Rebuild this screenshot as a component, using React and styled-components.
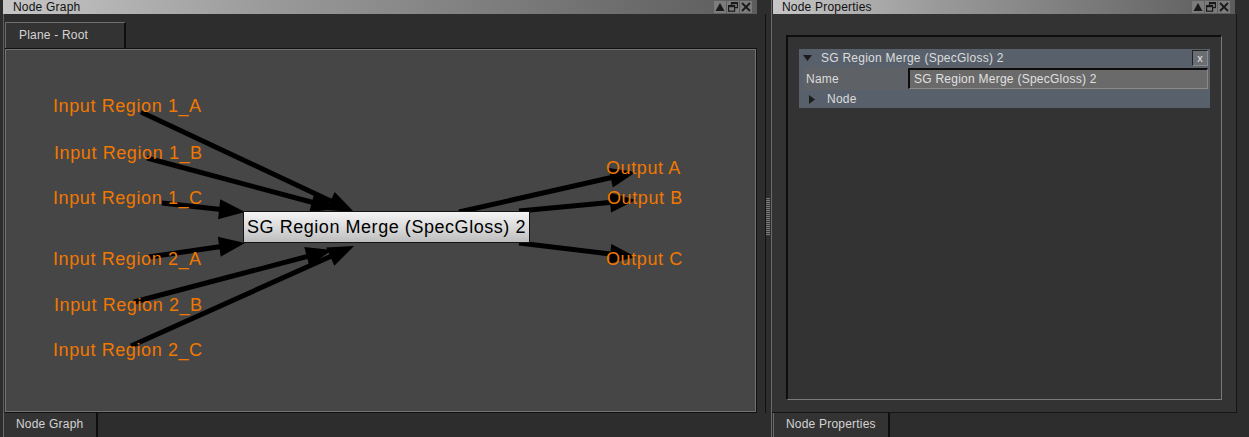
import React from "react";
import styled, { createGlobalStyle } from "styled-components";

const GlobalStyle = createGlobalStyle`
  html, body {
    margin: 0;
    padding: 0;
    background: #2d2d2d;
  }
  body {
    font-family: "Liberation Sans", Arial, sans-serif;
    overflow: hidden;
  }
`;

// canvas padding-box origin in page coordinates
const OX = 7;
const OY = 50;

const inputs = [
  { label: "Input Region 1_A", x: 54, y: 106 },
  { label: "Input Region 1_B", x: 55, y: 153 },
  { label: "Input Region 1_C", x: 54, y: 198 },
  { label: "Input Region 2_A", x: 54, y: 259 },
  { label: "Input Region 2_B", x: 55, y: 305 },
  { label: "Input Region 2_C", x: 54, y: 350 },
];

const outputs = [
  { label: "Output A", x: 607, y: 168 },
  { label: "Output B", x: 608, y: 198 },
  { label: "Output C", x: 607, y: 259 },
];

const edges = [
  [142, 112, 355, 212],
  [148, 158, 338, 209],
  [163, 203, 246, 212],
  [150, 257, 246, 243],
  [135, 302, 333, 250],
  [132, 346, 355, 246],
  [460, 212, 637, 172],
  [520, 211, 637, 200],
  [520, 243, 637, 257],
];

const Screen = styled.div`
  display: flex;
  width: 1249px;
  height: 437px;
  background: #2d2d2d;
`;

const Dock = styled.section`
  display: flex;
  flex-direction: column;
  width: ${(p) => p.$width}px;
  flex-shrink: 0;
`;

const TitleBar = styled.header`
  display: flex;
  align-items: center;
  justify-content: space-between;
  box-sizing: border-box;
  height: 14px;
  margin-left: ${(p) => p.$inset}px;
  width: ${(p) => p.$width}px;
  padding: 0 5px 0 ${(p) => p.$pad}px;
  background: linear-gradient(to right, #c6c6c6 0%, #9a9a9a 35%, #5c5c5c 100%);
  color: #111;
  font-size: 12px;
  line-height: 14px;
  letter-spacing: 0.2px;
`;

const TitleButtons = styled.div`
  display: flex;
  gap: 1px;
`;

const TitleButton = styled.span`
  display: flex;
  align-items: center;
  justify-content: center;
  width: 12px;
  height: 12px;
  background: #7c7c7c;
`;

const DockBody = styled.div`
  display: flex;
  flex-direction: column;
  height: 399px;
  margin-left: 3px;
  border-left: 1px solid #5e5e5e;
  border-right: 1px solid #111;
`;

const TabRow = styled.div`
  display: flex;
  align-items: flex-end;
  height: 34px;
  padding-left: 1px;
`;

const Tab = styled.div`
  box-sizing: border-box;
  width: ${(p) => p.$width}px;
  height: ${(p) => p.$height}px;
  padding-left: ${(p) => p.$pad}px;
  background: #333;
  border-top: ${(p) => (p.$top ? "1px solid #707070" : "none")};
  border-left: 1px solid #6a6a6a;
  border-right: 2px solid #0e0e0e;
  color: #d4d4d4;
  font-size: 12px;
  letter-spacing: 0.2px;
  line-height: ${(p) => p.$height - 2}px;
`;

const Frame = styled.div`
  box-sizing: border-box;
  display: flex;
  width: 752px;
  height: 365px;
  margin-left: 1px;
  border-top: 1px solid #111;
  border-right: 1px solid #111;
  border-bottom: 1px solid #111;
`;

const Canvas = styled.div`
  position: relative;
  flex: 1;
  background: #464646;
  border: 1px solid #727272;
  overflow: hidden;
`;

const Wires = styled.svg`
  position: absolute;
  left: 0;
  top: 0;
  width: 100%;
  height: 100%;
`;

const PortLabel = styled.span`
  position: absolute;
  color: #f17800;
  font-size: 18px;
  line-height: 20px;
  letter-spacing: 0.6px;
  white-space: nowrap;
`;

const GraphNode = styled.div`
  position: absolute;
  box-sizing: border-box;
  display: flex;
  align-items: center;
  justify-content: center;
  width: 287px;
  height: 32px;
  border: 1px solid #141414;
  background: linear-gradient(#f4f4f4, #d6d6d6 60%, #bdbdbd);
  color: #000;
  font-size: 18px;
  letter-spacing: 0.55px;
  white-space: nowrap;
`;

const BottomTabs = styled.div`
  display: flex;
  height: 24px;
  padding-left: ${(p) => p.$inset}px;
`;

const Splitter = styled.div`
  position: relative;
  width: 5px;
  flex-shrink: 0;
  border-right: 1px solid #6a6a6a;
`;

const Grip = styled.div`
  position: absolute;
  left: 0;
  top: 198px;
  width: 4px;
  height: 38px;
  background: repeating-linear-gradient(#7a7a7a 0 1px, #3a3a3a 1px 2px);
`;

const PropsBody = styled.div`
  display: flex;
  flex-direction: column;
  box-sizing: border-box;
  width: 465px;
  height: 399px;
  padding: 21px 14px 12px 14px;
  background: #333;
  border-right: 1px solid #151515;
  border-bottom: 1px solid #151515;
`;

const InnerBox = styled.div`
  flex: 1;
  box-sizing: border-box;
  padding: 12px 11px 0 11px;
  border-top: 2px solid #0e0e0e;
  border-left: 2px solid #0e0e0e;
  border-right: 1px solid #7a7a7a;
  border-bottom: 1px solid #7a7a7a;
  background: #333;
`;

const Group = styled.div`
  display: flex;
  flex-direction: column;
  width: 411px;
  background: #58616b;
  color: #dcdcdc;
  font-size: 12px;
  letter-spacing: 0.25px;
`;

const GroupHeader = styled.div`
  display: flex;
  align-items: center;
  height: 18px;
  padding-right: 2px;
`;

const Caret = styled.span`
  width: ${(p) => p.$w}px;
  padding-left: ${(p) => p.$pad}px;
  box-sizing: border-box;
  display: flex;
  align-items: center;
`;

const GroupTitle = styled.span`
  flex: 1;
`;

const CloseBox = styled.span`
  box-sizing: border-box;
  width: 16px;
  height: 16px;
  display: flex;
  align-items: center;
  justify-content: center;
  border: 1px solid #222;
  border-right-color: #8a8a8a;
  border-bottom-color: #8a8a8a;
  background: #6a6e73;
  color: #e8e8e8;
  font-size: 11px;
`;

const FieldRow = styled.div`
  display: flex;
  align-items: center;
  height: 23px;
  margin-left: 5px;
  background: #5e6166;
`;

const FieldLabel = styled.span`
  width: 102px;
  padding-left: 2px;
`;

const FieldInput = styled.div`
  box-sizing: border-box;
  width: 300px;
  height: 21px;
  padding-left: 4px;
  border-top: 2px solid #0c0c0c;
  border-left: 2px solid #0c0c0c;
  border-right: 1px solid #8a8a8a;
  border-bottom: 1px solid #8a8a8a;
  background: #6a6a6a;
  color: #e0e0e0;
  line-height: 18px;
`;

const SubRow = styled.div`
  display: flex;
  align-items: center;
  height: 18px;
  margin-left: 5px;
`;

function WindowButtons() {
  return (
    <TitleButtons>
      <TitleButton>
        <svg width="10" height="10" viewBox="0 0 10 10">
          <polygon points="5,1 9.5,9 0.5,9" fill="#1a1a1a" />
        </svg>
      </TitleButton>
      <TitleButton>
        <svg width="10" height="10" viewBox="0 0 10 10" fill="none" stroke="#1a1a1a" strokeWidth="1.2">
          <rect x="3.5" y="0.6" width="6" height="5" />
          <line x1="3.5" y1="1.4" x2="9.5" y2="1.4" strokeWidth="1.6" />
          <rect x="0.6" y="3.6" width="6" height="5.6" fill="#7c7c7c" />
          <line x1="0.6" y1="4.4" x2="6.6" y2="4.4" strokeWidth="1.6" />
        </svg>
      </TitleButton>
      <TitleButton>
        <svg width="10" height="10" viewBox="0 0 10 10" stroke="#1a1a1a" strokeWidth="1.8">
          <line x1="1" y1="1" x2="9" y2="9" />
          <line x1="9" y1="1" x2="1" y2="9" />
        </svg>
      </TitleButton>
    </TitleButtons>
  );
}

function Edge({ x1, y1, x2, y2 }) {
  const dx = x2 - x1;
  const dy = y2 - y1;
  const len = Math.hypot(dx, dy);
  const ux = dx / len;
  const uy = dy / len;
  const L = 26;
  const W = 10;
  const bx = x2 - ux * L;
  const by = y2 - uy * L;
  const pts = [
    [x2, y2],
    [bx - uy * W, by + ux * W],
    [bx + uy * W, by - ux * W],
  ]
    .map((p) => p.join(","))
    .join(" ");
  return (
    <g>
      <line x1={x1} y1={y1} x2={bx + ux * 2} y2={by + uy * 2} stroke="#000" strokeWidth="5" />
      <polygon points={pts} fill="#000" />
    </g>
  );
}

export default function App() {
  return (
    <>
      <GlobalStyle />
      <Screen>
        <Dock $width={766}>
          <TitleBar $inset={3} $width={754} $pad={10}>
            <span>Node Graph</span>
            <WindowButtons />
          </TitleBar>
          <DockBody>
            <TabRow>
              <Tab $width={121} $height={26} $pad={13} $top>
                Plane - Root
              </Tab>
            </TabRow>
            <Frame>
              <Canvas>
                <Wires>
                  {edges.map(([x1, y1, x2, y2], i) => (
                    <Edge key={i} x1={x1 - OX} y1={y1 - OY} x2={x2 - OX} y2={y2 - OY} />
                  ))}
                </Wires>
                {inputs.map((p) => (
                  <PortLabel key={p.label} style={{ left: p.x - OX, top: p.y - OY - 10 }}>
                    {p.label}
                  </PortLabel>
                ))}
                <GraphNode style={{ left: 244 - OX, top: 211 - OY }}>
                  SG Region Merge (SpecGloss) 2
                </GraphNode>
                {outputs.map((p) => (
                  <PortLabel key={p.label} style={{ left: p.x - OX, top: p.y - OY - 10 }}>
                    {p.label}
                  </PortLabel>
                ))}
              </Canvas>
            </Frame>
          </DockBody>
          <BottomTabs $inset={3}>
            <Tab $width={95} $height={24} $pad={12}>
              Node Graph
            </Tab>
          </BottomTabs>
        </Dock>
        <Splitter>
          <Grip />
        </Splitter>
        <Dock $width={477}>
          <TitleBar $inset={1} $width={462} $pad={9}>
            <span>Node Properties</span>
            <WindowButtons />
          </TitleBar>
          <PropsBody>
            <InnerBox>
              <Group>
                <GroupHeader>
                  <Caret $w={22} $pad={4}>
                    <svg width="9" height="7" viewBox="0 0 9 7">
                      <polygon points="0,0 9,0 4.5,6" fill="#1c1c1c" />
                    </svg>
                  </Caret>
                  <GroupTitle>SG Region Merge (SpecGloss) 2</GroupTitle>
                  <CloseBox>x</CloseBox>
                </GroupHeader>
                <FieldRow>
                  <FieldLabel>Name</FieldLabel>
                  <FieldInput>SG Region Merge (SpecGloss) 2</FieldInput>
                </FieldRow>
                <SubRow>
                  <Caret $w={23} $pad={5}>
                    <svg width="6" height="9" viewBox="0 0 6 9">
                      <polygon points="0,0 6,4.5 0,9" fill="#1c1c1c" />
                    </svg>
                  </Caret>
                  <span>Node</span>
                </SubRow>
              </Group>
            </InnerBox>
          </PropsBody>
          <BottomTabs $inset={1}>
            <Tab $width={117} $height={24} $pad={12}>
              Node Properties
            </Tab>
          </BottomTabs>
        </Dock>
      </Screen>
    </>
  );
}
